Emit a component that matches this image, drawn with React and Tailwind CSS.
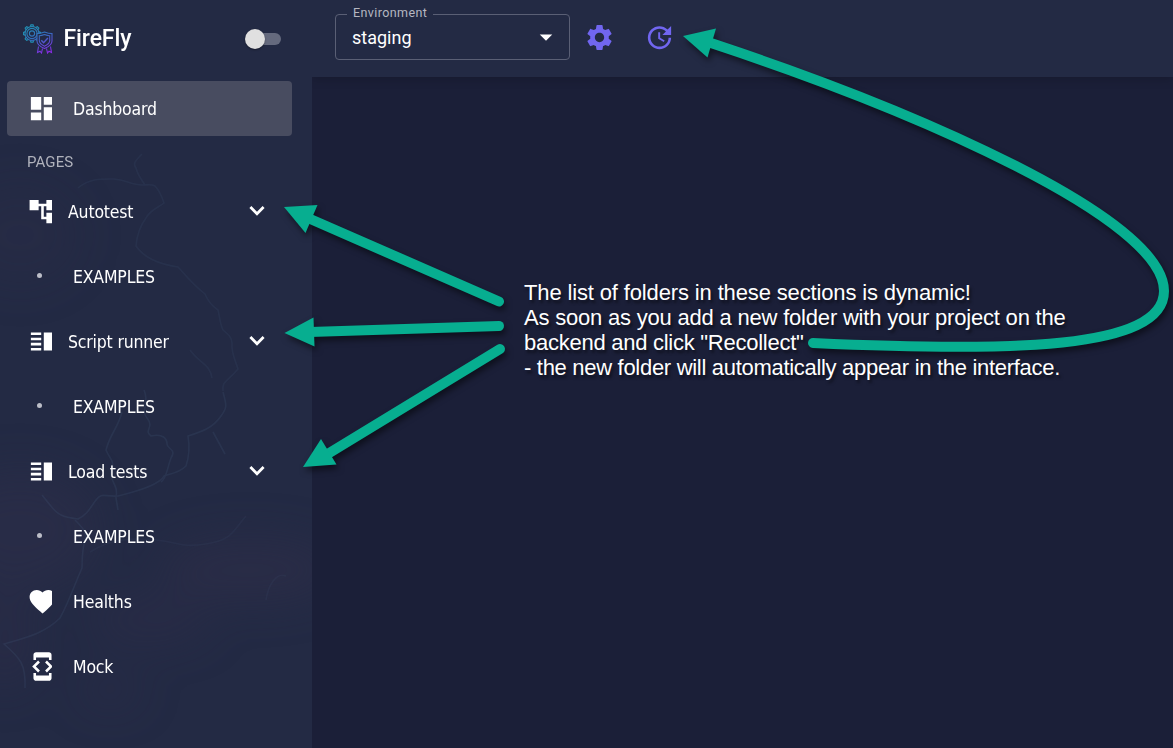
import React from "react";
import {
  MdDashboard,
  MdAccountTree,
  MdVerticalSplit,
  MdFavorite,
  MdDeveloperMode,
  MdSettings,
  MdUpdate,
  MdArrowDropDown,
} from "react-icons/md";

function Logo() {
  const gear = [0, 45, 90, 135, 180, 225, 270, 315];
  return (
    <svg className="h-[30px] w-[31px] shrink-0" viewBox="0 0 31 30" fill="none" stroke="url(#lg)" strokeWidth="1.1">
      <defs>
        <linearGradient id="lg" x1="8" y1="0" x2="20" y2="30" gradientUnits="userSpaceOnUse">
          <stop offset="0" stopColor="#1f93b5" />
          <stop offset="0.5" stopColor="#3a68c0" />
          <stop offset="1" stopColor="#8a2be8" />
        </linearGradient>
      </defs>
      <circle cx="9" cy="9.5" r="2.6" />
      <circle cx="9" cy="9.5" r="5.1" />
      <circle cx="9" cy="9.5" r="7" />
      {gear.map((a) => (
        <path key={a} d="M7.4 2.6L7.9 0.9H10.1L10.6 2.6" transform={`rotate(${a} 9 9.5)`} />
      ))}
      <path d="M14 9.6c2.600 0 5-.6 7.500-1.600 2.500 1 4.500 1.600 7.500 1.600v7.400c0 3.400-3 5.700-7.500 7.500-4.500-1.800-7.500-4.100-7.500-7.500z" fill="#232944" />
      <path d="M16.300 11.800c1.800 0 3.500-.5 5.200-1.200 1.700.7 3.400 1.200 5.200 1.200v5c0 2.400-2.200 4-5.200 5.400-3-1.400-5.200-3-5.200-5.400z" />
      <path d="M18.300 16.200l2.300 2.500 4.300-4.600" strokeWidth="1.500" />
      <path d="M15.500 22.500l-1 6 2.500-1.300 1.500 1.800 1-4.500M27.500 22.500l1 6-2.500-1.300-1.500 1.800-1-4.500" />
    </svg>
  );
}

function Chevron() {
  return (
    <svg className="mr-[43px] size-6 shrink-0" viewBox="0 0 24 24" fill="none" stroke="currentColor" strokeWidth="2.8">
      <path d="M5.400 8.100L12 14.700L18.600 8.100" />
    </svg>
  );
}

function MapBackdrop() {
  return (
    <svg className="absolute inset-0 h-full w-full" viewBox="0 0 312 748" fill="none">
      <defs>
        <filter id="soft" x="-100%" y="-100%" width="300%" height="300%" colorInterpolationFilters="sRGB">
          <feGaussianBlur stdDeviation="22" />
        </filter>
        <filter id="line" colorInterpolationFilters="sRGB">
          <feGaussianBlur stdDeviation="0.7" />
        </filter>
      </defs>
      <g filter="url(#soft)" fill="#35304c">
        <ellipse cx="20" cy="235" rx="60" ry="50" opacity="0.15" />
        <ellipse cx="20" cy="530" rx="80" ry="60" opacity="0.35" />
        <ellipse cx="250" cy="570" rx="90" ry="30" opacity="0.4" />
        <ellipse cx="150" cy="620" rx="60" ry="22" opacity="0.3" />
        <ellipse cx="110" cy="690" rx="30" ry="14" opacity="0.3" />
        <ellipse cx="5" cy="640" rx="30" ry="50" opacity="0.3" />
      </g>
      <g filter="url(#line)" stroke="#4b6384" strokeWidth="1.600">
        <g opacity="0.13">
          <path d="M78 188c12-10 24-9 36-9 12 1 18 6 28 6 6 0 10-1 13 1 5 5 7 11 9 17-5 4-14 7-18 15-6 8-9 16-10 28 8 12 22 18 42 21 6 6 12 15 27 27 4 10 10 14 13 16 2 8 2 14 5 20 6 5 9 8 9 13-1 10 4 19 6 26-12 14-16 12-15 22" />
          <path d="M142 154c-8 8-9 10-6 14 2 8 6 12 9 17" />
          <path d="M190 350c10 14 20 14 22 28" />
        </g>
        <g opacity="0.18">
          <path d="M223 392c4 14 4 16-2 24-8 12-20 16-33 20 2 12 0 24-2 30-8 8-18 8-22 10-4 8-22 14-46 20-14 1-16-4-22 4-6 8-8 14-18 19-16-2-20-4-28-14l-8-10" />
          <path d="M144 390c6 14-4 20 3 28 8 10-4 12 4 18 12-3 16 3 16 8s10 5 4 14c-4 10-4 20-10 24M122 412c-4 16-12 22-16 38 3 8 10 12 5 20-2 12 8 14 5 28l2 12M75 520c6 6 10 10 11 16-4 12-4 22-4 32-8 18-14 36-22 50-16 16-36 20-56 26 16 14 22 20 21 44" />
          <path d="M213 432l12 22" />
          <path d="M90 552c22-14 42-14 66-12s24 8 50 4 26-12 40-28M266 600c2-14 10-28 20-24" opacity="0.6" />
        </g>
      </g>
    </svg>
  );
}

function NavRow({ icon: Icon, label, expandable }) {
  return (
    <li className="flex h-[65px] items-center pl-[26.500px]">
      <span className="flex h-8 w-[25.500px] shrink-0 items-center overflow-hidden">
        <Icon className="size-[31px] shrink-0" />
      </span>
      <span className={expandable ? "ml-4 flex-1 pt-[3px]" : "ml-[21px] flex-1 pt-[3px]"}>{label}</span>
      {expandable && <Chevron />}
    </li>
  );
}

function SubRow({ label }) {
  return (
    <li className="flex h-[65px] items-center pl-[37px]">
      <span className="mb-px size-[5px] shrink-0 rounded-full bg-[#bcbec8]" />
      <span className="ml-[31px] pt-[3px]">{label}</span>
    </li>
  );
}

function Sidebar() {
  return (
    <aside className="relative w-[312px] shrink-0 overflow-hidden bg-[#232a44]">
      <MapBackdrop />
      <div className="relative flex h-full flex-col">
        <div className="flex h-[81px] items-center pr-[31px] pb-[4px] pl-[23px]">
          <Logo />
          <span className="ml-[9.500px] flex-1 pt-px font-[Roboto] text-[23px] font-medium tracking-[-0.1px]">FireFly</span>
          <span className="mt-px flex h-5 w-9 items-center rounded-full">
            <span className="z-10 size-5 shrink-0 rounded-full bg-[#e0e0e0] shadow-[0_1px_2px_rgba(0,0,0,0.35)]" />
            <span className="-ml-1 h-3 w-5 rounded-r-full bg-[#656a7e]" />
          </span>
        </div>
        <div className="mr-5 ml-[7px] flex h-[55px] items-center rounded bg-[#484c60] pl-[19.500px]">
          <span className="flex h-8 w-[25.500px] shrink-0 items-center overflow-hidden">
            <MdDashboard className="size-[31px] shrink-0" />
          </span>
          <span className="ml-[21px] pt-[2px]">Dashboard</span>
        </div>
        <div className="flex h-[42.500px] items-center pt-[9px] pl-[27px] font-[Roboto] text-[15px] tracking-[0.1px] text-[#b0b2bc]">PAGES</div>
        <ul>
          <NavRow icon={MdAccountTree} label="Autotest" expandable />
          <SubRow label="EXAMPLES" />
          <NavRow icon={MdVerticalSplit} label="Script runner" expandable />
          <SubRow label="EXAMPLES" />
          <NavRow icon={MdVerticalSplit} label="Load tests" expandable />
          <SubRow label="EXAMPLES" />
          <NavRow icon={MdFavorite} label="Healths" />
          <NavRow icon={MdDeveloperMode} label="Mock" />
        </ul>
      </div>
    </aside>
  );
}

function Header() {
  return (
    <header className="flex h-[77px] items-start bg-[#232a44] pl-[23px] font-[Roboto] tracking-normal shadow-[0_2px_10px_rgba(0,0,0,0.18)]">
      <fieldset className="mt-[6px] h-[54px] w-[235px] rounded border border-[#5a5f75] pl-4">
        <legend className="-ml-[5px] h-4 px-[6px] text-[12.500px] leading-[14px] tracking-[0.4px] text-[#b5b7c1]">Environment</legend>
        <div className="flex h-[30px] items-center justify-between pr-[8px] text-[18px]">
          <span>staging</span>
          <MdArrowDropDown className="size-[30px]" />
        </div>
      </fieldset>
      <div className="mt-[21.500px] ml-[13.500px] flex gap-[30px] text-[#7166f0]">
        <MdSettings className="size-[31px]" />
        <MdUpdate className="-ml-px size-[31px]" />
      </div>
    </header>
  );
}

function Arrows() {
  return (
    <svg className="pointer-events-none absolute inset-0 h-[748px] w-[1173px] drop-shadow-[2px_4px_3px_rgba(0,0,0,0.5)]" viewBox="0 0 1173 748" fill="none" stroke="#07ae90" strokeWidth="10" strokeLinecap="round">
      <path d="M499 301.500L308 218" />
      <path d="M499 326L310 332" />
      <path d="M500 349L326 455" />
      <path d="M813 343C1010 352 1164 350 1164 291C1164 219 920 112 708 42" />
      <g fill="#07ae90" stroke="none">
        <path d="M284 207L317.500 205L305.500 233z" />
        <path d="M284.500 333L313.500 317.500L314.500 346.500z" />
        <path d="M303 467L321 439L336.500 464.500z" />
        <path d="M683 36L716 28.500L707.500 57.500z" />
      </g>
    </svg>
  );
}

export default function App() {
  return (
    <div className="relative flex h-[748px] w-[1173px] overflow-hidden bg-[#1b1f38] font-['DejaVu_Sans_Condensed','DejaVu_Sans',sans-serif] text-[17.500px] tracking-[-0.18px] text-white">
      <Sidebar />
      <div className="flex flex-1 flex-col">
        <Header />
        <div className="mt-[203px] ml-[212px] font-['Liberation_Sans',Arial,sans-serif] text-[22px] leading-[25px] whitespace-nowrap [text-shadow:2px_3px_3px_rgba(0,0,0,0.5)]">
          <p className="tracking-[-0.14px]">The list of folders in these sections is dynamic!</p>
          <p className="tracking-[-0.2px]">As soon as you add a new folder with your project on the</p>
          <p className="tracking-[-0.26px]">backend and click "Recollect"</p>
          <p className="tracking-[-0.3px]">- the new folder will automatically appear in the interface.</p>
        </div>
      </div>
      <Arrows />
    </div>
  );
}
